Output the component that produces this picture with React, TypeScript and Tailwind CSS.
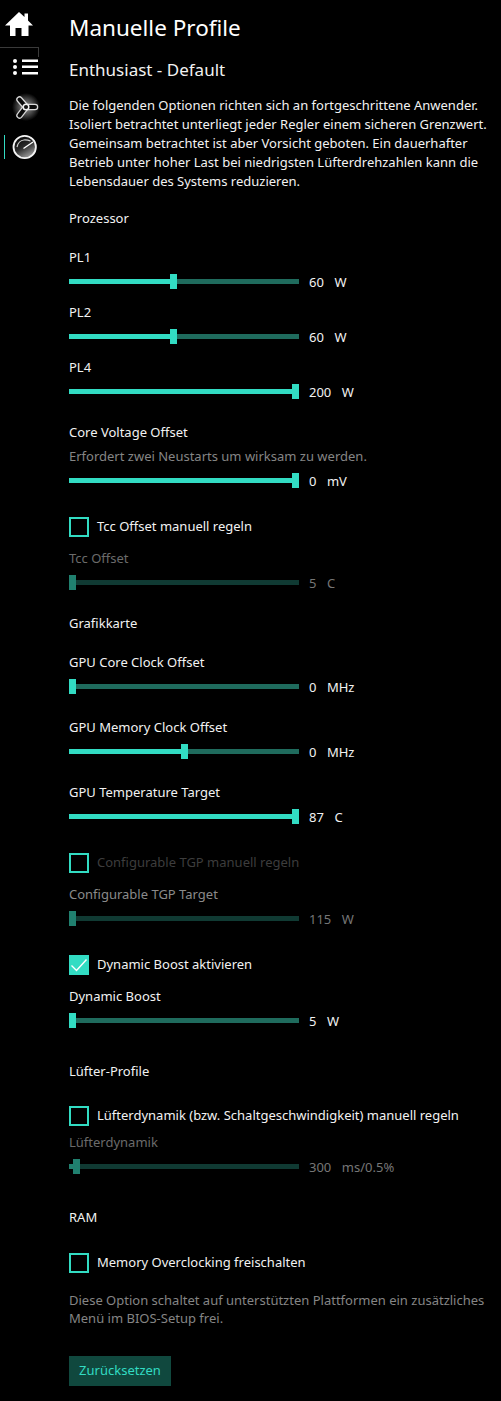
import type { ReactNode } from "react";

const font = "font-['Noto_Sans','Open_Sans',sans-serif]";

function Heading({ children, className = "" }: { children: ReactNode; className?: string }) {
  return <div className={`h-[19px] text-[13px] leading-[19px] text-[#f2f2f2] ${className}`}>{children}</div>;
}

interface SliderProps {
  fill: number;
  value: string;
  unit: string;
  disabled?: boolean;
  className?: string;
}

function Slider({ fill, value, unit, disabled = false, className = "" }: SliderProps) {
  const textColor = disabled ? "text-[#767676]" : "text-[#f2f2f2]";
  return (
    <div className={`flex h-[15px] items-center ${className}`}>
      <div className="flex h-[15px] w-[230px] items-center">
        <div className={`h-[5px] ${disabled ? "bg-[#20806f]" : "bg-[#32dcc3]"}`} style={{ width: fill }} />
        <div className={`h-[15px] w-[7px] ${disabled ? "bg-[#20806f]" : "bg-[#32dcc3]"}`} />
        <div className={`h-[5px] flex-1 ${disabled ? "bg-[#103a33]" : "bg-[#1f6b5d]"}`} />
      </div>
      <div className={`ml-[10px] flex gap-[10.5px] pt-[2px] text-[13px] leading-[15px] ${textColor}`}>
        <span>{value}</span>
        <span>{unit}</span>
      </div>
    </div>
  );
}

function Checkbox({
  label,
  checked = false,
  disabled = false,
  className = "",
}: {
  label: string;
  checked?: boolean;
  disabled?: boolean;
  className?: string;
}) {
  return (
    <div className={`flex h-5 items-center ${className}`}>
      <div className={`flex h-5 w-5 items-center justify-center border-2 border-[#32dcc3] ${checked ? "bg-[#32dcc3]" : ""}`}>
        {checked && (
          <svg viewBox="0 0 20 20" className="h-5 w-5 shrink-0" fill="none" stroke="#fff" strokeWidth="1.4">
            <path d="M2.5 10.5 7.5 15.5 17.5 4.5" />
          </svg>
        )}
      </div>
      <span className={`mb-[2px] ml-2 text-[13px] leading-5 ${disabled ? "text-[#3d3d3d]" : "text-[#f2f2f2]"}`}>{label}</span>
    </div>
  );
}

function Sidebar() {
  return (
    <div className="flex w-[69px] shrink-0 flex-col items-start">
      <svg viewBox="0 0 28 24" className="ml-[5px] mt-[12px] h-[24px] w-[28px]" fill="#fff">
        <path d="M14 0 19.5 5V1.5H23V8.5L28 13.5H23.5V24H16.5V16H10.5V24H5V13.5H0Z" />
      </svg>
      <div className="mt-[11px] h-[10px] w-[39px] border-r border-t border-[#3a3a3a]" />
      <svg viewBox="0 0 25 17" className="ml-[13px] mt-[1px] h-[17px] w-[25px]" fill="#fff">
        <circle cx="2" cy="3" r="2" />
        <circle cx="2" cy="9" r="2" />
        <circle cx="2" cy="15" r="2" />
        <rect x="9" y="1.5" width="16" height="2.5" />
        <rect x="9" y="7.5" width="16" height="2.5" />
        <rect x="9" y="14" width="16" height="2.5" />
      </svg>
      <svg viewBox="0 0 28 28" className="ml-[12px] mt-[18px] h-[28px] w-[28px]" fill="none" strokeLinecap="round">
        <defs>
          <radialGradient id="fanGlow">
            <stop offset="0" stopColor="#a0a0a0" />
            <stop offset="1" stopColor="#000" />
          </radialGradient>
        </defs>
        <circle cx="14" cy="14" r="14" fill="url(#fanGlow)" />
        <g stroke="#d8d8d8" strokeWidth="6.5">
          <path d="M14 14 7.5 6.5" />
          <path d="M14 14H23" />
          <path d="M14 14 7.5 22.5" />
        </g>
        <g stroke="#0a0a0a" strokeWidth="4">
          <path d="M14 14 7.5 6.5" />
          <path d="M14 14H23" />
          <path d="M14 14 7.5 22.5" />
        </g>
        <circle cx="14" cy="14" r="2.8" fill="#111" stroke="#f2f2f2" strokeWidth="1.5" />
      </svg>
      <div className="mt-[13px] flex items-center">
        <div className="ml-1 h-[24px] w-px bg-[#32dcc3]" />
        <svg viewBox="0 0 26 26" className="ml-[7px] h-[26px] w-[26px]">
          <defs>
            <linearGradient id="gaugeFill" x1="0.2" y1="0.1" x2="0.7" y2="1">
              <stop offset="0" stopColor="#0a0a0a" />
              <stop offset="0.45" stopColor="#2a2a2a" />
              <stop offset="1" stopColor="#a8a8a8" />
            </linearGradient>
          </defs>
          <circle cx="12.7" cy="13" r="11.2" fill="url(#gaugeFill)" stroke="#f4f4f4" strokeWidth="1.8" />
          <path d="M5 13Q6.5 6.5 12 6 15.5 5.8 18.5 7" fill="none" stroke="#cfcfcf" strokeWidth="1.2" />
          <path d="M11.5 14.5 21 8" stroke="#fff" strokeWidth="1.4" />
        </svg>
      </div>
    </div>
  );
}

export default function App() {
  return (
    <div className={`flex h-[1401px] w-[501px] overflow-hidden bg-black ${font}`}>
      <Sidebar />
      <div className="flex-1">
        <h1 className="mt-[14px] h-7 text-[22.5px] leading-7 text-white">Manuelle Profile</h1>
        <h2 className="mt-[16px] h-6 text-[17px] leading-6 text-[#f2f2f2]">Enthusiast - Default</h2>
        <p className="mt-[14px] w-[425px] text-[13px] leading-[19px] text-[#f2f2f2]">
          Die folgenden Optionen richten sich an fortgeschrittene Anwender. Isoliert betrachtet unterliegt jeder Regler
          einem sicheren Grenzwert. Gemeinsam betrachtet ist aber Vorsicht geboten. Ein dauerhafter Betrieb unter hoher
          Last bei niedrigsten Lüfterdrehzahlen kann die Lebensdauer des Systems reduzieren.
        </p>

        <Heading className="mt-[18px]">Prozessor</Heading>
        <Heading className="mt-5">PL1</Heading>
        <Slider className="mt-[7px]" fill={101} value="60" unit="W" />
        <Heading className="mt-[14px]">PL2</Heading>
        <Slider className="mt-[7px]" fill={101} value="60" unit="W" />
        <Heading className="mt-[14px]">PL4</Heading>
        <Slider className="mt-[7px]" fill={223} value="200" unit="W" />

        <Heading className="mt-[24px]">Core Voltage Offset</Heading>
        <div className="mt-[5px] h-[19px] text-[13px] leading-[19px] text-[#858585]">
          Erfordert zwei Neustarts um wirksam zu werden.
        </div>
        <Slider className="mt-[7px]" fill={223} value="0" unit="mV" />

        <Checkbox className="mt-[29px]" label="Tcc Offset manuell regeln" />
        <Heading className="mt-[12px] !text-[#6b6b6b]">Tcc Offset</Heading>
        <Slider className="mt-[7px]" fill={0} value="5" unit="C" disabled />

        <Heading className="mt-[24px]">Grafikkarte</Heading>
        <Heading className="mt-5">GPU Core Clock Offset</Heading>
        <Slider className="mt-[7px]" fill={0} value="0" unit="MHz" />
        <Heading className="mt-[24px]">GPU Memory Clock Offset</Heading>
        <Slider className="mt-[7px]" fill={112} value="0" unit="MHz" />
        <Heading className="mt-[24px]">GPU Temperature Target</Heading>
        <Slider className="mt-[7px]" fill={223} value="87" unit="C" />

        <Checkbox className="mt-[29px]" label="Configurable TGP manuell regeln" disabled />
        <Heading className="mt-[12px] !text-[#8a8a8a]">Configurable TGP Target</Heading>
        <Slider className="mt-[7px]" fill={0} value="115" unit="W" disabled />

        <Checkbox className="mt-[29px]" label="Dynamic Boost aktivieren" checked />
        <Heading className="mt-[12px]">Dynamic Boost</Heading>
        <Slider className="mt-[7px]" fill={0} value="5" unit="W" />

        <Heading className="mt-[34px]">Lüfter-Profile</Heading>
        <Checkbox className="mt-[25px]" label="Lüfterdynamik (bzw. Schaltgeschwindigkeit) manuell regeln" />
        <Heading className="mt-[7px] !text-[#6b6b6b]">Lüfterdynamik</Heading>
        <Slider className="mt-[7px]" fill={4} value="300" unit="ms/0.5%" disabled />

        <Heading className="mt-[34px]">RAM</Heading>
        <Checkbox className="mt-[26px]" label="Memory Overclocking freischalten" />
        <p className="mt-[18px] w-[425px] text-[13px] leading-[18px] text-[#858585]">
          Diese Option schaltet auf unterstützten Plattformen ein zusätzliches Menü im BIOS-Setup frei.
        </p>
        <button type="button" className="mt-[29px] h-[30px] w-[102px] bg-[#10483e] text-[13px] text-[#32dcc3]">
          Zurücksetzen
        </button>
      </div>
    </div>
  );
}
